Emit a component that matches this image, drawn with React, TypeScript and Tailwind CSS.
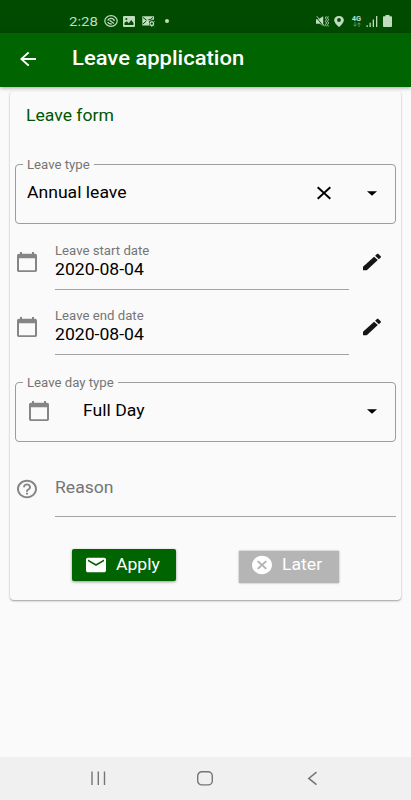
import type { ReactNode } from "react";

const CALENDAR =
  "M20 3h-1V1h-2v2H7V1H5v2H4c-1.1 0-2 .9-2 2v16c0 1.1.9 2 2 2h16c1.1 0 2-.9 2-2V5c0-1.1-.9-2-2-2zm0 18H4V8h16v13z";
const PENCIL =
  "M3 17.25V21h3.75L17.81 9.94l-3.75-3.75L3 17.25zM20.71 7.04c.39-.39.39-1.02 0-1.41l-2.34-2.34c-.39-.39-1.02-.39-1.41 0l-1.83 1.83 3.75 3.75 1.83-1.83z";
const HELP =
  "M11 18h2v-2h-2v2zm1-16C6.48 2 2 6.48 2 12s4.48 10 10 10 10-4.48 10-10S17.52 2 12 2zm0 18c-4.41 0-8-3.59-8-8s3.59-8 8-8 8 3.59 8 8-3.59 8-8 8zm0-14c-2.21 0-4 1.79-4 4h2c0-1.1.9-2 2-2s2 .9 2 2c0 2-3 1.75-3 5h2c0-2.25 3-2.5 3-5 0-2.21-1.79-4-4-4z";
const CLOSE =
  "M19 6.41L17.59 5 12 10.59 6.41 5 5 6.41 10.59 12 5 17.59 6.41 19 12 13.41 17.59 19 19 17.59 13.41 12z";
const MAIL =
  "M20 4H4c-1.1 0-1.99.9-1.99 2L2 18c0 1.1.9 2 2 2h16c1.1 0 2-.9 2-2V6c0-1.1-.9-2-2-2zm0 4l-8 5-8-5V6l8 5 8-5v2z";
const CANCEL =
  "M12 2C6.47 2 2 6.47 2 12s4.47 10 10 10 10-4.47 10-10S17.53 2 12 2zm5 13.59L15.59 17 12 13.41 8.41 17 7 15.59 10.59 12 7 8.41 8.41 7 12 10.59 15.59 7 17 8.41 13.41 12 17 15.59z";
const BACK = "M20 11H7.83l5.59-5.59L12 4l-8 8 8 8 1.41-1.41L7.83 13H20v-2z";

function Icon({ d, className = "" }: { d: string; className?: string }) {
  return (
    <svg viewBox="0 0 24 24" preserveAspectRatio="none" fill="currentColor" className={`h-[22px] w-6 shrink-0 ${className}`}>
      <path d={d} />
    </svg>
  );
}

function Text({ children, className = "" }: { children: ReactNode; className?: string }) {
  return <span className={`block origin-center scale-y-[0.91] whitespace-nowrap ${className}`}>{children}</span>;
}

function StatusBar() {
  return (
    <div className="flex h-[33px] shrink-0 items-center bg-[#004b00] pt-[9px] pr-[19px] pl-[69px] text-[#bfdcbf]">
      <Text className="w-[29px] text-[15px] leading-5">2:28</Text>
      <svg className="ml-[6px] h-3 w-[14px]" viewBox="0 0 14 12" fill="none" stroke="currentColor">
        <ellipse cx="7" cy="6" rx="6.2" ry="5.3" strokeWidth="1.2" />
        <path d="M3.6 5.6C4.300 3.900 5.600 3.200 7.200 3.300c1.700.1 2.900 1 3.200 2.600M3.700 6.900c.7 1.500 2 2.200 3.900 2.100M5.600 5.300l4.300 3.200" strokeWidth="1.3" />
      </svg>
      <svg className="ml-[5px] h-[11px] w-3" viewBox="0 0 12 11">
        <rect width="12" height="11" rx="1" fill="currentColor" />
        <path d="M1.5 9V6.7l2.3-1.5 2 2L8.2 4l2.3 3V9z" fill="#004b00" />
        <circle cx="3.4" cy="3" r="1" fill="#004b00" />
      </svg>
      <svg className="ml-[7px] h-[11px] w-[13px]" viewBox="0 0 13 11" fill="none" stroke="currentColor">
        <path d="M.3.300h11.700v3.500H9.200L7 5.500v4H.3z" fill="currentColor" stroke="none" />
        <path d="M1 1.500l3.700 2.800M1 8l3-2.800M6.300 3.800l2-.3 2.700-2" stroke="#004b00" />
        <circle cx="9.800" cy="7.700" r="1.800" strokeWidth="1.300" />
        <path d="M9.800 4.700v1M9.800 9.700v1M11.800 6l.6-.6M11.500 9.400l.7.600M8 9.400l-.6.600" />
      </svg>
      <span className="ml-[10px] size-1 rounded-full bg-current" />
      <div className="ml-auto flex items-center">
        <svg className="h-[11px] w-[13px]" viewBox="0 0 13 11" fill="currentColor">
          <path d="M0 3.2h2.4L7.2.2v10.3L3.9 7.8H0z" />
          <path d="M0 .7l7.500 9.800" stroke="#004b00" strokeWidth="1" />
          <path d="M.8.200l7.700 10" stroke="currentColor" strokeWidth=".9" />
          <path d="M10.400.3L9.400 2l1.200 1.600-1.200 1.700L10.600 7 9.400 8.700l1 1.700M12.300.3L11.500 2l1.100 1.600-1.100 1.700L12.600 7l-1.100 1.700.8 1.700" fill="none" stroke="currentColor" strokeWidth=".9" />
        </svg>
        <svg className="ml-[5px] h-[11px] w-[10px]" viewBox="0 0 10 11">
          <path d="M5 0C2.1 0 .2 1.7.2 4.2.2 7 5 11 5 11s4.8-4 4.8-6.8C9.800 1.700 7.900 0 5 0z" fill="currentColor" />
          <circle cx="5" cy="4" r="1.9" fill="#004b00" />
        </svg>
        <div className="ml-[7px] flex h-3 w-[11px] flex-col items-center">
          <span className="block text-[7.5px] leading-[7px] font-bold">4G</span>
          <svg className="h-[5px] w-2 opacity-60" viewBox="0 0 8 5" fill="none" stroke="currentColor" strokeWidth=".8">
            <path d="M2 0v4M.4 2.600L2 4.300l1.600-1.700M6 5V1M4.400 2.400L6 .7l1.600 1.700" />
          </svg>
        </div>
        <svg className="ml-[4px] h-[11px] w-3" viewBox="0 0 12 11" fill="currentColor">
          <path d="M.5 9.300h1.300V11H.5zM3.500 6.700h1.300V11H3.500zM6.700 3.400H8V11H6.700zM10 0h1.300v11H10z" />
        </svg>
        <svg className="ml-[5px] h-3 w-[9px]" viewBox="0 0 9 12" fill="currentColor">
          <path d="M2.500 0h4v1.300h1.700q.8 0 .8.800V11q0 1-.8 1H.8Q0 12 0 11V2.100q0-.8.800-.8h1.700z" />
        </svg>
      </div>
    </div>
  );
}

function OutlinedField({ label, children }: { label: string; children: ReactNode }) {
  return (
    <fieldset className="h-[67px] min-w-0 rounded-[4px] border border-[#9c9c9c] pr-[11px] pl-[7px]">
      <legend className="h-[14px] px-[4px] pt-[2px]">
        <Text className="text-[13.2px] leading-3 text-[#757575]">{label}</Text>
      </legend>
      <div className="flex h-[43px] items-center pl-1">{children}</div>
    </fieldset>
  );
}

function Caret() {
  return <Icon d="M7 10l5 5 5-5z" className="mt-px text-black" />;
}

function DateField({ label, value }: { label: string; value: string }) {
  return (
    <div className="flex h-[65px]">
      <Icon d={CALENDAR} className="mt-[17.5px] text-[#858585]" />
      <div className="ml-4 h-[57px] w-[294px] border-b border-[#a3a3a3] pt-[10px]">
        <Text className="text-[13.2px] leading-4 text-[#757575]">{label}</Text>
        <Text className="pt-px text-[17.6px] leading-5 text-black">{value}</Text>
      </div>
      <Icon d={PENCIL} className="mt-[18px] ml-[11px] text-[#151515]" />
    </div>
  );
}

export default function App() {
  return (
    <div className="flex h-[800px] w-[411px] flex-col overflow-hidden bg-[#fafafa] font-[Roboto,sans-serif]">
      <StatusBar />
      <header className="relative z-10 flex h-[54px] shrink-0 items-center bg-[#006400] pb-[2px] pl-4 text-white shadow-[0_1px_4px_rgba(0,0,0,0.35)]">
        <Icon d={BACK} />
        <Text className="ml-8 text-[22px] leading-7 font-medium">Leave application</Text>
      </header>
      <main className="flex-1">
        <section className="mx-[10px] mt-1 h-[509px] rounded-[4px] bg-[#fafafa] px-[5px] shadow-[0_1px_2px_rgba(0,0,0,0.38)]">
          <h2 className="h-[66px] pt-[15px] pl-[11px]">
            <Text className="text-[17.6px] leading-5 text-[#005500]">Leave form</Text>
          </h2>
          <OutlinedField label="Leave type">
            <Text className="text-[17.6px] leading-5 text-black">Annual leave</Text>
            <Icon d={CLOSE} className="mt-px ml-auto text-black" />
            <span className="w-6" />
            <Caret />
          </OutlinedField>
          <div className="mt-2 pt-px">
            <DateField label="Leave start date" value="2020-08-04" />
            <DateField label="Leave end date" value="2020-08-04" />
          </div>
          <div className="mt-3">
            <OutlinedField label="Leave day type">
              <Icon d={CALENDAR} className="text-[#858585]" />
              <Text className="ml-8 text-[17.6px] leading-5 text-black">Full Day</Text>
              <span className="flex-1" />
              <Caret />
            </OutlinedField>
          </div>
          <div className="mt-[17px] flex h-[58px]">
            <Icon d={HELP} className="mt-[18.5px] text-[#858585]" />
            <div className="ml-4 flex-1 border-b border-[#a3a3a3] pt-[19px]">
              <Text className="text-[17.6px] leading-5 text-[#757575]">Reason</Text>
            </div>
          </div>
          <div className="mt-8 flex pl-[57px]">
            <button className="flex h-8 w-[104px] items-center rounded-[2px] bg-[#006400] pl-3 text-white shadow-[0_1px_3px_rgba(0,0,0,0.4)]">
              <Icon d={MAIL} />
              <Text className="ml-2 text-[17.6px] leading-5">Apply</Text>
            </button>
            <button className="mt-[2px] ml-[63px] flex h-8 w-[100px] items-center bg-[#b5b5b5] pb-[4px] pl-[11px] text-white shadow-[0_0_2px_rgba(0,0,0,0.35)]">
              <Icon d={CANCEL} />
              <Text className="ml-2 text-[17.6px] leading-5">Later</Text>
            </button>
          </div>
        </section>
      </main>
      <nav className="flex h-[43px] shrink-0 items-center bg-[#f0f0f0] text-[#757575]">
        <svg className="ml-[90px] h-[15px] w-4" viewBox="0 0 16 15" stroke="currentColor" strokeWidth="1.4">
          <path d="M2 .5v13.500M8.300.5v13.500M14.500.5v13.500" />
        </svg>
        <svg className="ml-[91px] h-[15px] w-4" viewBox="0 0 16 15" fill="none" stroke="currentColor" strokeWidth="1.4">
          <rect x=".7" y=".7" width="14.600" height="13.200" rx="4.200" />
        </svg>
        <svg className="ml-[94px] h-[15px] w-[11px]" viewBox="0 0 11 15" fill="none" stroke="currentColor" strokeWidth="1.5">
          <path d="M9.500 1.200L1.800 7.400l7.700 6.200" />
        </svg>
      </nav>
    </div>
  );
}
